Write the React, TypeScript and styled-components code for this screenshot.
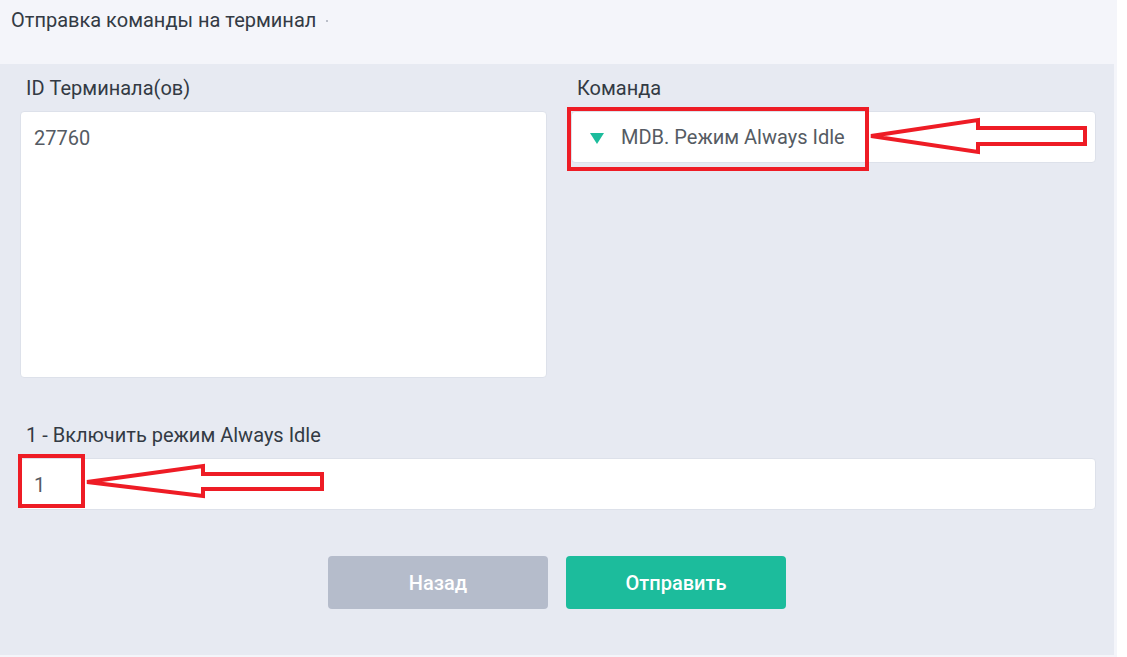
import React from 'react';
import styled, { createGlobalStyle } from 'styled-components';

const GlobalStyle = createGlobalStyle`
  html, body {
    margin: 0;
    padding: 0;
    background: #ffffff;
    font-family: Roboto, "Noto Sans", "Liberation Sans", sans-serif;
  }
`;

const Page = styled.div`
  width: 1117px;
  height: 657px;
  background: #f4f5fa;
  display: flex;
  flex-direction: column;
`;

const Header = styled.div`
  height: 64px;
  box-sizing: border-box;
  padding: 8px 0 0 11px;
  display: flex;
  align-items: flex-start;
  gap: 10px;
`;

const Title = styled.h1`
  margin: 0;
  font-size: 20px;
  font-weight: 400;
  line-height: 24px;
  color: #333a44;
`;

const Dot = styled.span`
  width: 2px;
  height: 2px;
  margin-top: 12px;
  border-radius: 50%;
  background: #a8adb8;
`;

const Panel = styled.section`
  width: 1114px;
  height: 591px;
  box-sizing: border-box;
  background: #e7eaf2;
  padding: 13px 18px 0 20px;
`;

const Columns = styled.div`
  display: grid;
  grid-template-columns: 527px 525px;
  column-gap: 24px;
`;

const Field = styled.div`
  display: flex;
  flex-direction: column;
`;

const Label = styled.label`
  font-size: 20px;
  line-height: 22px;
  color: #333a44;
  padding-left: 6px;
  margin-bottom: 12px;
`;

const Box = styled.div<{ $height: number }>`
  position: relative;
  height: ${p => p.$height}px;
  box-sizing: border-box;
  background: #ffffff;
  border: 1px solid #dde1ea;
  border-radius: 4px;
  font-size: 20px;
  color: #555b63;
`;

const TextValue = styled.div`
  padding: 14px 0 0 13px;
  line-height: 24px;
`;

const SelectRow = styled.div`
  display: flex;
  align-items: center;
  gap: 17px;
  height: 100%;
  padding-left: 18px;
`;

const Caret = styled.span`
  width: 0;
  height: 0;
  border-left: 7px solid transparent;
  border-right: 7px solid transparent;
  border-top: 11px solid #1cbc9c;
  margin-top: 2px;
`;

const Mark = styled.div<{ $left: number; $top: number; $w: number; $h: number }>`
  position: absolute;
  left: ${p => p.$left}px;
  top: ${p => p.$top}px;
  width: ${p => p.$w}px;
  height: ${p => p.$h}px;
  box-sizing: border-box;
  border: 4px solid #ee1c25;
  pointer-events: none;
`;

const Arrow = styled.svg`
  position: absolute;
  left: 0;
  top: 0;
  overflow: visible;
  pointer-events: none;
`;

const ParamField = styled(Field)`
  margin-top: 46px;
`;

const Actions = styled.div`
  display: flex;
  justify-content: center;
  gap: 18px;
  margin-top: 46px;
  padding-right: 2px;
`;

const Button = styled.button<{ $primary?: boolean }>`
  width: 220px;
  height: 53px;
  border: none;
  border-radius: 4px;
  background: ${p => (p.$primary ? '#1cbc9c' : '#b5bccb')};
  color: #ffffff;
  font-family: Roboto, "Noto Sans", sans-serif;
  font-size: 20px;
  font-weight: 500;
`;

const ArrowShape = ({ points }: { points: string }) => (
  <Arrow width="1" height="1">
    <polygon
      points={points}
      fill="none"
      stroke="#ee1c25"
      strokeWidth="4"
      strokeLinejoin="miter"
    />
  </Arrow>
);

export default function App() {
  return (
    <>
      <GlobalStyle />
      <Page>
        <Header>
          <Title>Отправка команды на терминал</Title>
          <Dot />
        </Header>
        <Panel>
          <Columns>
            <Field>
              <Label>ID Терминала(ов)</Label>
              <Box $height={267}>
                <TextValue>27760</TextValue>
              </Box>
            </Field>
            <Field>
              <Label>Команда</Label>
              <Box $height={52}>
                <SelectRow>
                  <Caret />
                  <span>MDB. Режим Always Idle</span>
                </SelectRow>
                <Mark $left={-5} $top={-5} $w={302} $h={64} />
                <ArrowShape points="299,24 406,8 406,16 513,16 513,32 406,32 406,40" />
              </Box>
            </Field>
          </Columns>
          <ParamField>
            <Label>1 - Включить режим Always Idle</Label>
            <Box $height={52}>
              <TextValue>1</TextValue>
              <Mark $left={-3} $top={-5} $w={67} $h={54} />
              <ArrowShape points="66,23 182,7 182,15 301,15 301,30 182,30 182,37" />
            </Box>
          </ParamField>
          <Actions>
            <Button>Назад</Button>
            <Button $primary>Отправить</Button>
          </Actions>
        </Panel>
      </Page>
    </>
  );
}
